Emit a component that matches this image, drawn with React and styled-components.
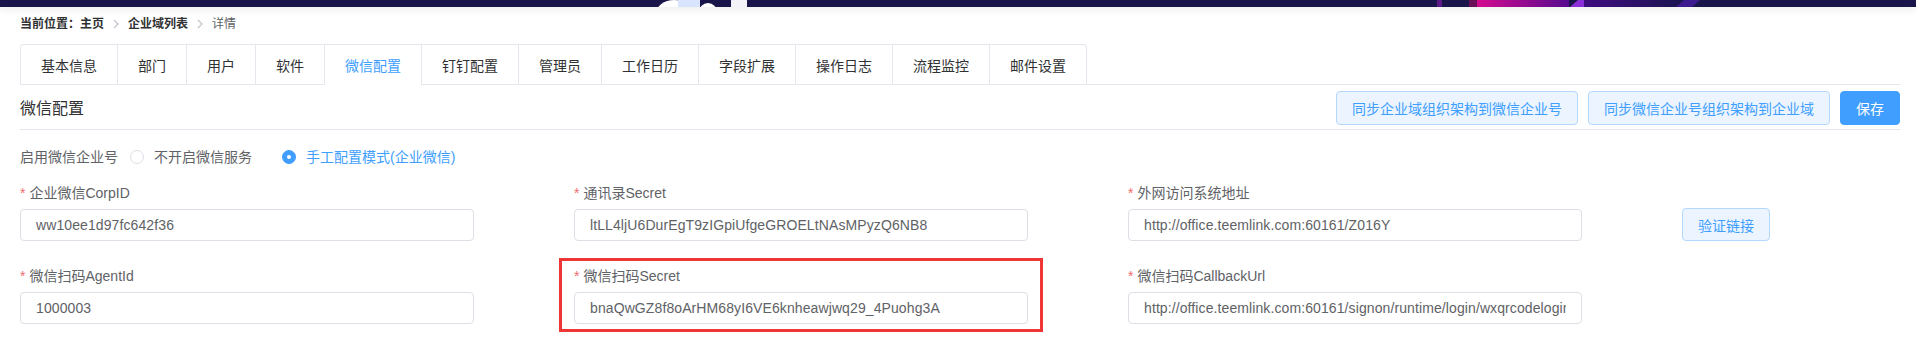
import styled, { createGlobalStyle } from "styled-components";

const GlobalStyle = createGlobalStyle`
  body {
    margin: 0;
    background: #fff;
    font-family: "Liberation Sans", "Noto Sans CJK SC", sans-serif;
    color: #303133;
  }
  #root {
    min-height: 100vh;
  }
  * {
    box-sizing: border-box;
  }
`;

const TopBar = styled.div`
  height: 7px;
  background: #19154a;
  box-shadow: 0 2px 9px rgba(0, 0, 0, 0.09);
  position: relative;
  z-index: 1;

  svg {
    display: block;
  }
`;

const Page = styled.div`
  padding: 0 16px 24px 20px;
`;

const Breadcrumb = styled.div`
  display: flex;
  align-items: center;
  padding-top: 7px;
  margin-bottom: 10px;
  line-height: 20px;
  font-size: 12px;
`;

const Crumb = styled.span`
  font-weight: ${(p) => (p.$strong ? 700 : 400)};
  color: ${(p) => (p.$strong ? "#303133" : "#606266")};
`;

const Separator = styled.span`
  display: inline-flex;
  margin: 0 9px;
  color: #c0c4cc;
`;

const TabHeader = styled.div`
  border-bottom: 1px solid #e4e7ed;
`;

const TabNav = styled.div`
  display: inline-flex;
  border: 1px solid #e4e7ed;
  border-bottom: none;
  border-radius: 4px 4px 0 0;
  margin-bottom: -1px;
`;

const Tab = styled.div`
  height: 40px;
  padding: 0 20px;
  display: flex;
  align-items: center;
  font-size: 14px;
  color: ${(p) => (p.$active ? "#409eff" : "#303133")};
  border-left: 1px solid #e4e7ed;
  border-bottom: 1px solid ${(p) => (p.$active ? "#fff" : "transparent")};

  &:first-child {
    border-left: none;
  }
`;

const HeaderRow = styled.div`
  height: 45px;
  display: flex;
  align-items: center;
  justify-content: space-between;
  border-bottom: 1px solid #e4e7ed;
`;

const Title = styled.h2`
  margin: 0;
  font-size: 16px;
  font-weight: 400;
  color: #303133;
`;

const Actions = styled.div`
  display: flex;
  gap: 10px;
  padding-top: 2px;
`;

const Button = styled.button`
  height: ${(p) => p.$height || 34}px;
  padding: 0 15px;
  border-radius: 4px;
  font-family: inherit;
  font-size: 14px;
  cursor: pointer;
  border: 1px solid ${(p) => (p.$primary ? "#409eff" : "#b3d8ff")};
  background: ${(p) => (p.$primary ? "#409eff" : "#ecf5ff")};
  color: ${(p) => (p.$primary ? "#fff" : "#409eff")};
`;

const RadioRow = styled.div`
  display: flex;
  align-items: center;
  margin-top: 17px;
  line-height: 20px;
  font-size: 14px;
  color: #606266;
`;

const RadioTitle = styled.span`
  margin-right: 12px;
`;

const RadioOption = styled.label`
  display: inline-flex;
  align-items: center;
  margin-right: 30px;
  color: ${(p) => (p.$checked ? "#409eff" : "#606266")};
`;

const RadioDot = styled.span`
  width: 14px;
  height: 14px;
  border-radius: 50%;
  margin-right: 10px;
  border: 1px solid ${(p) => (p.$checked ? "#409eff" : "#dcdfe6")};
  background: ${(p) => (p.$checked ? "#409eff" : "#fff")};
  display: flex;
  align-items: center;
  justify-content: center;

  &::after {
    content: "";
    width: 4px;
    height: 4px;
    border-radius: 50%;
    background: #fff;
  }
`;

const FormGrid = styled.div`
  display: grid;
  grid-template-columns: repeat(3, 454px) auto;
  column-gap: 100px;
  row-gap: 25px;
  margin-top: 16px;
`;

const FormItem = styled.div`
  position: relative;
  display: flex;
  flex-direction: column;
  gap: 6px;

  ${(p) =>
    p.$highlight &&
    `
    &::after {
      content: "";
      position: absolute;
      top: -8px;
      bottom: -8px;
      left: -15px;
      right: -15px;
      border: 3px solid #ef3636;
      pointer-events: none;
    }
  `}
`;

const Label = styled.label`
  line-height: 20px;
  font-size: 14px;
  color: #606266;
`;

const Required = styled.span`
  color: #f56c6c;
  margin-right: 4px;
`;

const Input = styled.input`
  height: 32px;
  width: 100%;
  padding: 0 15px;
  border: 1px solid #dcdfe6;
  border-radius: 4px;
  font-family: "Liberation Sans", "Noto Sans CJK SC", sans-serif;
  font-size: 14px;
  letter-spacing: 0.1px;
  color: #606266;
  background: #fff;
  outline: none;
`;

const VerifyCell = styled.div`
  padding-top: 25px;
`;

const tabs = [
  "基本信息",
  "部门",
  "用户",
  "软件",
  "微信配置",
  "钉钉配置",
  "管理员",
  "工作日历",
  "字段扩展",
  "操作日志",
  "流程监控",
  "邮件设置",
];

function Banner() {
  return (
    <svg width="1916" height="7" viewBox="0 0 1916 7">
      <defs>
        <linearGradient id="mag" x1="0" x2="1" y1="0" y2="0">
          <stop offset="0" stopColor="#d40a90" />
          <stop offset="1" stopColor="#560a8e" />
        </linearGradient>
        <linearGradient id="vio" x1="0" x2="1" y1="0" y2="0">
          <stop offset="0" stopColor="#3f0c80" />
          <stop offset="1" stopColor="#1c1452" />
        </linearGradient>
      </defs>
      <ellipse cx="674" cy="14" rx="18" ry="14" fill="#ffffff" />
      <rect x="678" y="0" width="22" height="7" fill="#d9e4ff" />
      <ellipse cx="708" cy="12" rx="9" ry="9" fill="#ffffff" />
      <rect x="731" y="0" width="16" height="7" fill="#f4f4f8" />
      <rect x="1437" y="0" width="5" height="7" fill="#5c1a86" />
      <rect x="1469" y="0" width="8" height="7" fill="#6a0f58" />
      <rect x="1477" y="0" width="92" height="7" fill="url(#mag)" />
      <polygon points="1570,7 1578,0 1592,0 1584,7" fill="#8b2fd8" />
      <rect x="1584" y="0" width="96" height="7" fill="url(#vio)" />
      <polygon points="1676,7 1684,0 1700,0 1692,7" fill="#3d1a8e" />
    </svg>
  );
}

function Chevron() {
  return (
    <Separator>
      <svg width="6" height="10" viewBox="0 0 6 10">
        <path d="M1 1l4 4-4 4" fill="none" stroke="currentColor" strokeWidth="1.2" />
      </svg>
    </Separator>
  );
}

function Field({ label, value, highlight }) {
  return (
    <FormItem $highlight={highlight}>
      <Label>
        <Required>*</Required>
        {label}
      </Label>
      <Input readOnly value={value} />
    </FormItem>
  );
}

export default function App() {
  return (
    <>
      <GlobalStyle />
      <TopBar>
        <Banner />
      </TopBar>
      <Page>
        <Breadcrumb>
          <Crumb $strong>当前位置：主页</Crumb>
          <Chevron />
          <Crumb $strong>企业域列表</Crumb>
          <Chevron />
          <Crumb>详情</Crumb>
        </Breadcrumb>

        <TabHeader>
          <TabNav>
            {tabs.map((t) => (
              <Tab key={t} $active={t === "微信配置"}>
                {t}
              </Tab>
            ))}
          </TabNav>
        </TabHeader>

        <HeaderRow>
          <Title>微信配置</Title>
          <Actions>
            <Button>同步企业域组织架构到微信企业号</Button>
            <Button>同步微信企业号组织架构到企业域</Button>
            <Button $primary>保存</Button>
          </Actions>
        </HeaderRow>

        <RadioRow>
          <RadioTitle>启用微信企业号</RadioTitle>
          <RadioOption>
            <RadioDot />
            不开启微信服务
          </RadioOption>
          <RadioOption $checked>
            <RadioDot $checked />
            手工配置模式(企业微信)
          </RadioOption>
        </RadioRow>

        <FormGrid>
          <Field label="企业微信CorpID" value="ww10ee1d97fc642f36" />
          <Field
            label="通讯录Secret"
            value="ltLL4ljU6DurEgT9zIGpiUfgeGROELtNAsMPyzQ6NB8"
          />
          <Field
            label="外网访问系统地址"
            value="http://office.teemlink.com:60161/Z016Y"
          />
          <VerifyCell>
            <Button $height={33}>验证链接</Button>
          </VerifyCell>

          <Field label="微信扫码AgentId" value="1000003" />
          <Field
            label="微信扫码Secret"
            value="bnaQwGZ8f8oArHM68yI6VE6knheawjwq29_4Puohg3A"
            highlight
          />
          <Field
            label="微信扫码CallbackUrl"
            value="http://office.teemlink.com:60161/signon/runtime/login/wxqrcodelogin.action"
          />
        </FormGrid>
      </Page>
    </>
  );
}
